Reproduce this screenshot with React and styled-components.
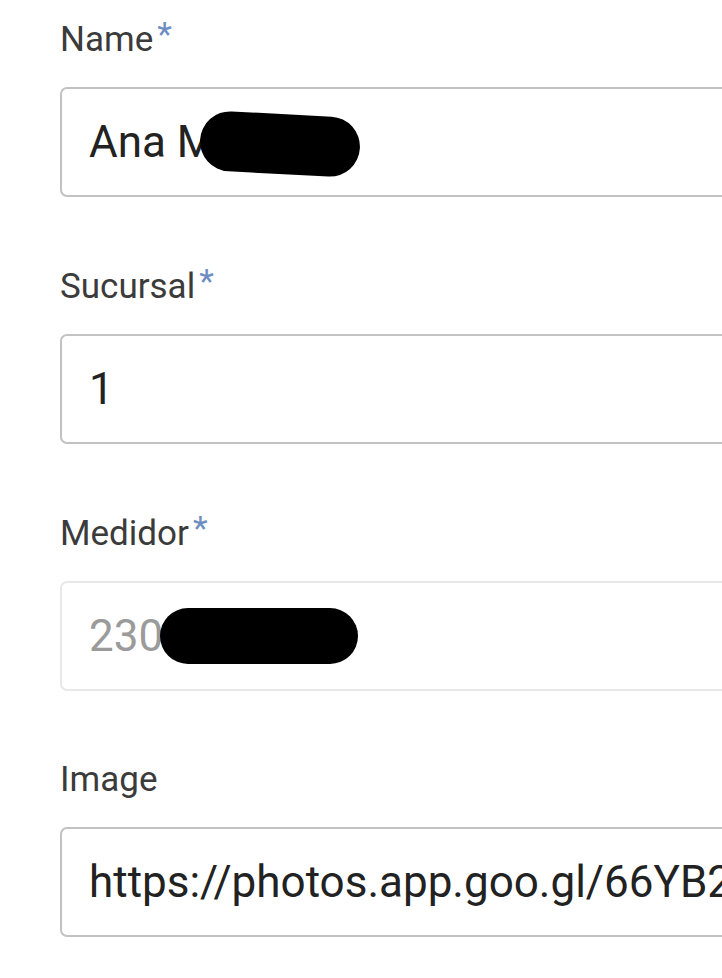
import React from "react";
import styled, { createGlobalStyle } from "styled-components";

const GlobalStyle = createGlobalStyle`
  html, body {
    margin: 0;
    padding: 0;
    background: #ffffff;
  }
  body {
    font-family: Roboto, "Liberation Sans", Arial, sans-serif;
  }
`;

const Page = styled.div`
  width: 722px;
  height: 978px;
  overflow: hidden;
`;

const Form = styled.form`
  width: 1000px;
  padding: 14px 0 0 60px;
  display: flex;
  flex-direction: column;
`;

const Field = styled.div`
  display: flex;
  flex-direction: column;
  margin-bottom: 64px;
`;

const Label = styled.label`
  font-size: 35px;
  line-height: 50px;
  color: #3b3b3b;
  margin-bottom: 22px;
`;

const Star = styled.span`
  color: #6d8dc2;
  margin-left: 4px;
  font-size: 34px;
  position: relative;
  top: -5px;
`;

const InputWrap = styled.div`
  position: relative;
  height: 110px;
  box-sizing: border-box;
  border: 2px solid ${(p) => (p.disabled ? "#e8e8e8" : "#c2c2c2")};
  border-radius: 7px;
  display: flex;
  align-items: center;
  padding-left: 27px;
`;

const Value = styled.span`
  font-size: 44px;
  color: ${(p) => (p.disabled ? "#9b9b9b" : "#222222")};
  white-space: nowrap;
`;

const Redaction = styled.div`
  position: absolute;
  left: ${(p) => p.left}px;
  top: ${(p) => p.top}px;
  width: ${(p) => p.width}px;
  height: ${(p) => p.height}px;
  background: #000;
  border-radius: 40px;
  transform: rotate(${(p) => p.rot || 0}deg);
`;

function FormField({ label, required, value, disabled, redact }) {
  return (
    <Field>
      <Label>
        {label}
        {required && <Star>*</Star>}
      </Label>
      <InputWrap disabled={disabled}>
        <Value disabled={disabled}>{value}</Value>
        {redact && <Redaction {...redact} />}
      </InputWrap>
    </Field>
  );
}

export default function App() {
  return (
    <Page>
      <GlobalStyle />
      <Form>
        <FormField
          label="Name"
          required
          value="Ana M"
          redact={{ left: 138, top: 25, width: 160, height: 60, rot: 3 }}
        />
        <FormField label="Sucursal" required value="1" />
        <FormField
          label="Medidor"
          required
          disabled
          value="230"
          redact={{ left: 98, top: 25, width: 198, height: 56 }}
        />
        <FormField label="Image" value="https://photos.app.goo.gl/66YB2" />
      </Form>
    </Page>
  );
}
